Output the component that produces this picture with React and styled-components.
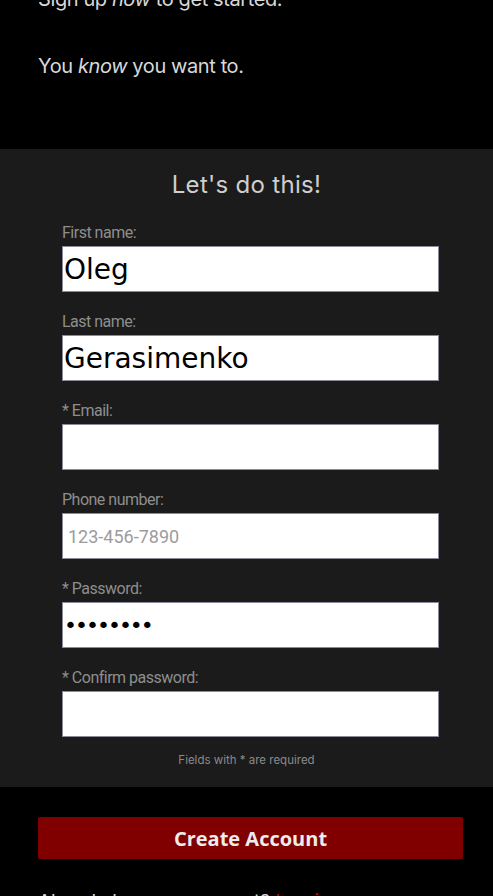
import styled, { createGlobalStyle } from 'styled-components'

const GlobalStyle = createGlobalStyle`
  html, body {
    margin: 0;
    padding: 0;
    background: #000;
    overflow: hidden;
  }
  * {
    box-sizing: border-box;
  }
`

const Page = styled.div`
  width: 493px;
  height: 896px;
  overflow: hidden;
  background: #000;
  font-family: Inter, "Open Sans", sans-serif;
`

const Intro = styled.section`
  margin-top: -15px;
  padding: 0 38px 69px;
  color: #d8d8d8;
  font-size: 20px;
  line-height: 28px;
`

const IntroLine = styled.p`
  margin: 0 0 ${(p) => p.$gap || 0}px;
  letter-spacing: -0.4px;
`

const FormPanel = styled.form`
  background: #1b1b1b;
  padding: 20px 54px 18px 62px;
  display: flex;
  flex-direction: column;
`

const Title = styled.h2`
  margin: 0 0 22px -8px;
  text-align: center;
  font-weight: 400;
  font-size: 24px;
  line-height: 32px;
  color: #cfcfcf;
  letter-spacing: 0.3px;
`

const Field = styled.div`
  display: flex;
  flex-direction: column;
  gap: 3px;
  margin-bottom: 20px;

  &:last-of-type {
    margin-bottom: 14px;
  }
`

const Label = styled.label`
  font-family: Roboto, "Liberation Sans", sans-serif;
  font-size: 16px;
  line-height: 20px;
  letter-spacing: -0.5px;
  color: #8e8e8e;
`

const Input = styled.input`
  width: 377px;
  height: 46px;
  margin: 0;
  padding: 1px ${(p) => p.$padX || 1}px;
  border: 1px solid #8b8a9a;
  border-radius: 0;
  background: #fff;
  color: #000;
  font-family: "DejaVu Sans", sans-serif;
  font-size: ${(p) => p.$size || 18}px;
  letter-spacing: ${(p) => p.$track || 0}px;
  outline: none;

  &::placeholder {
    color: #9c9c9c;
    font-family: Roboto, "Noto Sans", sans-serif;
    letter-spacing: 0;
  }
`

const Note = styled.p`
  margin: 0 0 0 -8px;
  text-align: center;
  font-size: 11.5px;
  line-height: 18px;
  color: #8a8a8a;
`

const Actions = styled.div`
  padding: 30px 30px 0 38px;
  display: flex;
  flex-direction: column;
  gap: 29px;
`

const SubmitButton = styled.button`
  height: 42px;
  width: 425px;
  border: none;
  border-radius: 2px;
  background: #800000;
  color: #ececec;
  font-family: "Open Sans", "Noto Sans", sans-serif;
  font-weight: 700;
  font-size: 20px;
  cursor: pointer;
`

const LoginLine = styled.p`
  margin: 0;
  font-size: 19px;
  line-height: 28px;
  color: #d8d8d8;

  a {
    color: #c00000;
    text-decoration: none;
  }
`

const fields = [
  { label: 'First name:', type: 'text', value: 'Oleg', size: 28 },
  { label: 'Last name:', type: 'text', value: 'Gerasimenko', size: 28 },
  { label: '* Email:', type: 'email', value: '' },
  { label: 'Phone number:', type: 'tel', value: '', placeholder: '123-456-7890', padX: 5 },
  { label: '* Password:', type: 'password', value: '12345678', size: 22, track: -2 },
  { label: '* Confirm password:', type: 'password', value: '' },
]

export default function App() {
  return (
    <Page>
      <GlobalStyle />
      <Intro>
        <IntroLine $gap={39}>
          Sign up <em>now</em> to get started.
        </IntroLine>
        <IntroLine>
          You <em>know</em> you want to.
        </IntroLine>
      </Intro>

      <FormPanel onSubmit={(e) => e.preventDefault()}>
        <Title>Let's do this!</Title>
        {fields.map((f) => (
          <Field key={f.label}>
            <Label>{f.label}</Label>
            <Input
              type={f.type}
              defaultValue={f.value}
              placeholder={f.placeholder}
              $size={f.size}
              $padX={f.padX}
              $track={f.track}
            />
          </Field>
        ))}
        <Note>Fields with * are required</Note>
      </FormPanel>

      <Actions>
        <SubmitButton type="button">Create Account</SubmitButton>
        <LoginLine>
          Already have an account? <a href="#">Log in</a>
        </LoginLine>
      </Actions>
    </Page>
  )
}
